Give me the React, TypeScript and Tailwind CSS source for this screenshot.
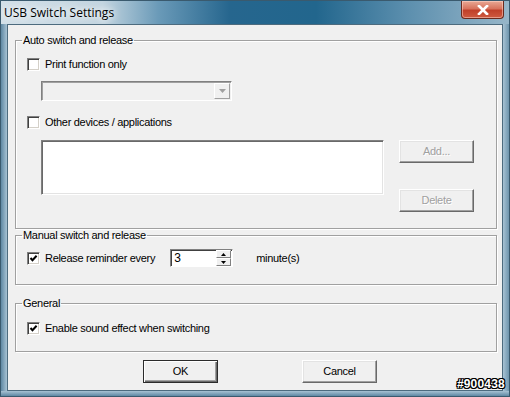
import React from 'react';

const ui = "font-['Liberation_Sans',Arial,sans-serif] text-[11px] tracking-[-0.3px] text-black";

function Check({ checked }: { checked?: boolean }) {
  return (
    <span className="flex h-[13px] w-[13px] shrink-0 items-center justify-center border border-t-[#808080] border-l-[#808080] border-r-white border-b-white bg-white shadow-[inset_1px_1px_0_#404040,inset_-1px_-1px_0_#d4d0c8]">
      {checked && (
        <svg width="9" height="9" viewBox="0 0 9 9">
          <polyline points="1.5,4 3.5,6.2 7.6,1.8" fill="none" stroke="#000" strokeWidth="2" />
        </svg>
      )}
    </span>
  );
}

function CheckRow({ label, checked }: { label: string; checked?: boolean }) {
  return (
    <div className="flex h-[13px] items-center gap-[5px]">
      <Check checked={checked} />
      <span className="leading-[13px]">{label}</span>
    </div>
  );
}

function Btn({ label, disabled, isDefault }: { label: string; disabled?: boolean; isDefault?: boolean }) {
  const frame = isDefault
    ? 'border-[#2b2b2b] shadow-[inset_1px_1px_0_#fff,inset_-1px_-1px_0_#696969,inset_-2px_-2px_0_#a0a0a0]'
    : 'border-t-white border-l-white border-r-[#696969] border-b-[#696969] shadow-[inset_-1px_-1px_0_#a0a0a0,inset_1px_1px_0_#e3e3e3]';
  return (
    <div
      className={`flex h-[23px] w-[75px] items-center justify-center border bg-[#f0f0f0] ${frame} ${
        disabled ? 'text-[#a0a0a0] [text-shadow:1px_1px_0_#fff]' : ''
      }`}
    >
      {label}
    </div>
  );
}

function Group({ title, className, children }: { title: string; className: string; children: React.ReactNode }) {
  return (
    <fieldset
      className={`border border-[#a0a0a0] shadow-[inset_1px_1px_0_#fff,1px_1px_0_#fff] ${className}`}
    >
      <legend className="ml-[6px] px-[1px] leading-[13px]">{title}</legend>
      {children}
    </fieldset>
  );
}

export default function App() {
  return (
    <div className={`relative flex h-[397px] w-[510px] flex-col overflow-hidden border border-[#3a5a6e] bg-[#8fb0c4] ${ui}`}>
      {/* title bar */}
      <div className="flex h-[23px] shrink-0 justify-between bg-[linear-gradient(90deg,#d3e0e8_0%,#c3d5e0_20%,#6a9aB8_31%,#26668e_45%,#22668d_62%,#5c8fae_80%,#97b6c9_100%)]">
        <span className="pl-[3px] pt-[3px] font-['Open_Sans','Noto_Sans',sans-serif] text-[12px] tracking-[0px] [text-shadow:0_0_6px_#fff,0_0_10px_#fff]">
          USB Switch Settings
        </span>
        <div className="mr-[5px] flex h-[18px] w-[43px] items-center justify-center rounded-b-[4px] border border-t-0 border-[#6b2a1e] bg-[linear-gradient(180deg,#e9a995_0%,#d8735d_45%,#c0402a_55%,#cf5a40_100%)] shadow-[inset_0_0_0_1px_rgba(255,220,210,0.5)]">
          <svg width="12" height="10" viewBox="0 0 12 10">
            <path d="M2 1 L10 9 M10 1 L2 9" stroke="#fff" strokeWidth="2.6" strokeLinecap="square" />
          </svg>
        </div>
      </div>

      <div className="flex min-h-0 flex-1">
        <div className="w-[6px] shrink-0 bg-[linear-gradient(90deg,#5f88a3,#a7c2d3)]" />
        {/* client area */}
        <div className="flex flex-1 flex-col border border-[#4d6b7e] bg-[#f0f0f0] pl-[7px] pr-[5px]">
          <Group title="Auto switch and release" className="mt-[9px] h-[195px]">
            <div className="flex flex-col pl-[11px]">
              <div className="mt-[11px]">
                <CheckRow label="Print function only" />
              </div>
              <div className="ml-[14px] mt-[10px] flex h-[20px] w-[191px] items-center justify-end border border-t-[#808080] border-l-[#808080] border-r-white border-b-white bg-[#f0f0f0] shadow-[inset_1px_1px_0_#a0a0a0] pr-[1px]">
                <div className="flex h-[16px] w-[16px] items-center justify-center border border-t-white border-l-white border-r-[#a0a0a0] border-b-[#a0a0a0] bg-[#f0f0f0]">
                  <svg width="7" height="4" viewBox="0 0 7 4">
                    <path d="M0 0 H7 L3.5 4 Z" fill="#a0a0a0" />
                  </svg>
                </div>
              </div>
              <div className="mt-[15px]">
                <CheckRow label="Other devices / applications" />
              </div>
              <div className="ml-[14px] mt-[11px] flex gap-[15px]">
                <div className="h-[55px] w-[343px] border border-t-[#808080] border-l-[#808080] border-r-white border-b-white bg-white shadow-[inset_1px_1px_0_#696969,inset_-1px_-1px_0_#e3e3e3]" />
                <div className="flex flex-col gap-[26px]">
                  <Btn label="Add..." disabled />
                  <Btn label="Delete" disabled />
                </div>
              </div>
            </div>
          </Group>

          <Group title="Manual switch and release" className="h-[56px]">
            <div className="mt-[7px] flex items-center pl-[11px]">
              <CheckRow label="Release reminder every" checked />
              <div className="ml-[15px] flex h-[18px] w-[63px] items-center justify-between border border-t-[#808080] border-l-[#808080] border-r-white border-b-white bg-white shadow-[inset_1px_1px_0_#404040]">
                <span className="pl-[3px] text-[12px]">3</span>
                <div className="mr-[1px] flex h-[16px] w-[15px] flex-col">
                  {[0, 1].map((i) => (
                    <div
                      key={i}
                      className="flex h-[8px] items-center justify-center border border-t-white border-l-white border-r-[#808080] border-b-[#808080] bg-[#f0f0f0]"
                    >
                      <svg width="5" height="3" viewBox="0 0 5 3">
                        <path d={i === 0 ? 'M0 3 H5 L2.5 0 Z' : 'M0 0 H5 L2.5 3 Z'} fill="#000" />
                      </svg>
                    </div>
                  ))}
                </div>
              </div>
              <span className="ml-[23px]">minute(s)</span>
            </div>
          </Group>

          <Group title="General" className="mt-[12px] h-[55px]">
            <div className="mt-[12px] pl-[11px]">
              <CheckRow label="Enable sound effect when switching" checked />
            </div>
          </Group>

          <div className="mt-[8px] flex">
            <div className="ml-[128px]">
              <Btn label="OK" isDefault />
            </div>
            <div className="ml-[84px]">
              <Btn label="Cancel" />
            </div>
          </div>
        </div>
        <div className="w-[6px] shrink-0 bg-[linear-gradient(90deg,#a7c2d3,#6f95ad)]" />
      </div>
      <div className="h-[5px] shrink-0 bg-[linear-gradient(180deg,#a7c2d3,#5f88a3)]" />

      <span className="absolute bottom-[3px] right-[4px] font-['Liberation_Sans',Arial,sans-serif] text-[12px] font-bold tracking-[0.2px] text-white [text-shadow:1px_0_0_#000,-1px_0_0_#000,0_1px_0_#000,0_-1px_0_#000,1px_1px_0_#000,-1px_-1px_0_#000,1px_-1px_0_#000,-1px_1px_0_#000]">
        #900438
      </span>
    </div>
  );
}
